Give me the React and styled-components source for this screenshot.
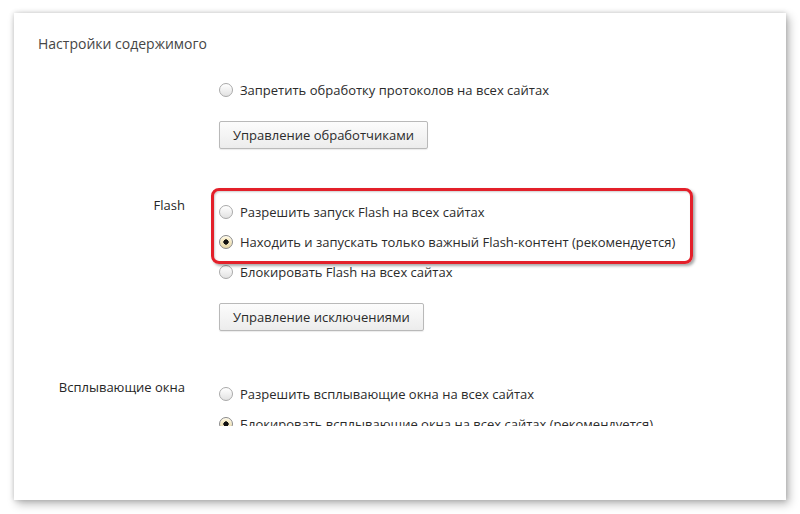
import React from "react";
import styled, { createGlobalStyle } from "styled-components";

const Global = createGlobalStyle`
  html, body { margin: 0; padding: 0; background: #ffffff; }
  body { font-family: "Open Sans", "Noto Sans", "Liberation Sans", sans-serif; }
`;

const Page = styled.div`
  width: 800px;
  height: 514px;
  box-sizing: border-box;
  padding: 13px 14px 14px 14px;
  overflow: hidden;
`;

const Card = styled.div`
  height: 487px;
  background: #ffffff;
  box-shadow: 0 0 5px rgba(0, 0, 0, 0.18), 3px 4px 9px rgba(0, 0, 0, 0.28);
  box-sizing: border-box;
  padding: 23px 0 0 24px;
`;

const Title = styled.div`
  font-size: 14px;
  line-height: 16px;
  color: #464646;
  height: 16px;
`;

const Scroll = styled.div`
  margin-top: 23px;
  height: 351px;
  overflow: hidden;
  display: flex;
  flex-direction: column;
  gap: 48px;
`;

const Section = styled.section`
  display: grid;
  grid-template-columns: 147px 1fr;
  column-gap: 34px;
`;

const Label = styled.div`
  text-align: right;
  font-size: 13px;
  line-height: 16px;
  color: #262626;
`;

const Options = styled.div`
  position: relative;
  display: flex;
  flex-direction: column;
  align-items: flex-start;
`;

const RadioRow = styled.label`
  display: flex;
  align-items: center;
  height: 30px;
  font-size: 13px;
  color: #2b2b2b;
  white-space: nowrap;
`;

const Radio = styled.span`
  width: 14px;
  height: 14px;
  box-sizing: border-box;
  border-radius: 50%;
  border: 1px solid ${(p) => (p.$checked ? "#8a8a8a" : "#a9a9a9")};
  background: ${(p) =>
    p.$checked
      ? "radial-gradient(circle at 50% 50%, #111 0 2.4px, transparent 2.9px), linear-gradient(#fff6d8, #e6d7a8)"
      : "linear-gradient(#ffffff, #e2e2e2)"};
  box-shadow: inset 0 1px 1px rgba(255, 255, 255, 0.8);
  margin-right: 7px;
  flex: none;
`;

const Button = styled.button`
  margin-top: ${(p) => p.$gap}px;
  height: 28px;
  padding: 0 13px;
  font-family: inherit;
  font-size: 13px;
  color: #2b2b2b;
  border: 1px solid #b9b9b9;
  border-radius: 2px;
  background: linear-gradient(#fcfcfc, #ececec);
  box-shadow: 0 1px 1px rgba(0, 0, 0, 0.08);
`;

const Highlight = styled.div`
  position: absolute;
  left: -8px;
  top: -9px;
  width: 482px;
  height: 76px;
  box-sizing: border-box;
  border: 3px solid #e3202a;
  border-radius: 8px;
  box-shadow: 2px 2px 3px rgba(0, 0, 0, 0.35), inset 1px 1px 2px rgba(0, 0, 0, 0.2);
  pointer-events: none;
`;

const Option = ({ checked, children }) => (
  <RadioRow>
    <Radio $checked={checked} />
    {children}
  </RadioRow>
);

export default function App() {
  return (
    <>
      <Global />
      <Page>
        <Card>
          <Title>Настройки содержимого</Title>
          <Scroll>
            <Section>
              <Label />
              <Options>
                <Option>Запретить обработку протоколов на всех сайтах</Option>
                <Button $gap={16}>Управление обработчиками</Button>
              </Options>
            </Section>
            <Section>
              <Label>Flash</Label>
              <Options>
                <Option>Разрешить запуск Flash на всех сайтах</Option>
                <Option checked>
                  Находить и запускать только важный Flash-контент (рекомендуется)
                </Option>
                <Option>Блокировать Flash на всех сайтах</Option>
                <Button $gap={16}>Управление исключениями</Button>
                <Highlight />
              </Options>
            </Section>
            <Section>
              <Label>Всплывающие окна</Label>
              <Options>
                <Option>Разрешить всплывающие окна на всех сайтах</Option>
                <Option checked>
                  Блокировать всплывающие окна на всех сайтах (рекомендуется)
                </Option>
              </Options>
            </Section>
          </Scroll>
        </Card>
      </Page>
    </>
  );
}
